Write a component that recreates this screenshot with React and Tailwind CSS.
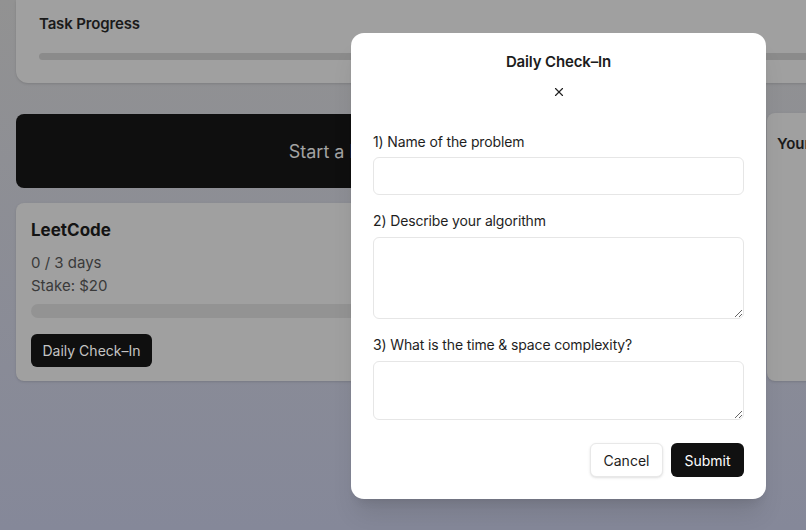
import React from "react";
import { X } from "lucide-react";

export default function App() {
  return (
    <div
      className="relative w-[806px] h-[530px] overflow-hidden bg-gradient-to-b from-[#929292] to-[#858899]"
      style={{ fontFamily: "Inter, 'Noto Sans', sans-serif" }}
    >
      <div className="w-[1126px] px-4">
        {/* Task progress card */}
        <div className="h-[83px] rounded-b-xl bg-[#a0a0a0] shadow-sm px-[23px] pt-[14px]">
          <div className="text-[15px] font-semibold leading-5 text-[#1a1a1a] tracking-[-0.01em]">Task Progress</div>
          <div className="mt-[19px] h-[7px] rounded-full bg-[#8b8b8b]" />
        </div>

        <div className="mt-[31px] grid grid-cols-[735px_1fr] gap-4">
          <div className="flex flex-col gap-[15px]">
            <div className="h-[74px] rounded-lg bg-[#0f0f0f] flex items-center justify-center text-[18px] text-[#a3a3a3]">
              Start a New Challenge
            </div>
            <div className="h-[178px] rounded-lg bg-[#a0a0a0] shadow-sm px-[15px] pt-[17px]">
              <div className="text-[17px] font-bold leading-5 text-[#141414]">LeetCode</div>
              <div className="mt-[11px] text-[15px] leading-[23px] text-[#3a3a3a]">0 / 3 days</div>
              <div className="text-[15px] leading-[23px] text-[#3a3a3a]">Stake: $20</div>
              <div className="mt-[7px] h-[14px] rounded-full bg-[#939393]" />
              <div className="mt-4 inline-flex h-[33px] w-[121px] items-center justify-center rounded-md bg-[#0f0f0f] text-[14px] text-[#c4c4c4]">
                Daily Check–In
              </div>
            </div>
          </div>
          <div className="h-[268px] -mt-px rounded-lg bg-[#a0a0a0] shadow-sm px-[10px] pt-[21px]">
            <div className="text-[15px] font-semibold leading-5 text-[#1a1a1a]">Your Challenges</div>
          </div>
        </div>
      </div>

      {/* Modal */}
      <div className="absolute left-[351px] top-[33px] w-[415px] h-[466px] rounded-[13px] bg-white shadow-xl px-[22px] pt-[19px]">
        <div className="text-center text-[15px] font-semibold leading-5 text-[#1c1c1c] tracking-[-0.01em]">Daily Check–In</div>
        <div className="mt-[13px] flex justify-center">
          <X size={14} strokeWidth={2} className="text-[#222]" />
        </div>
        <div className="mt-[33px] text-[14px] font-normal leading-5 text-[#1e1e1e] tracking-[-0.01em]">1) Name of the problem</div>
        <input className="mt-[5px] block w-full h-[38px] rounded-md border border-[#e6e6e6] outline-none px-3 text-sm" />
        <div className="mt-4 text-[14px] font-normal leading-5 text-[#1e1e1e] tracking-[-0.01em]">2) Describe your algorithm</div>
        <textarea className="mt-[6px] block w-full h-[82px] rounded-md border border-[#e6e6e6] outline-none px-3 py-2 text-sm" />
        <div className="mt-4 text-[14px] font-normal leading-5 text-[#1e1e1e] tracking-[-0.01em]">3) What is the time &amp; space complexity?</div>
        <textarea className="mt-[6px] block w-full h-[59px] rounded-md border border-[#e6e6e6] outline-none px-3 py-2 text-sm" />
        <div className="mt-[23px] flex justify-end gap-2">
          <button className="h-[34px] w-[73px] rounded-md border border-[#e8e8e8] bg-white text-[14px] font-normal text-[#1c1c1c] shadow-sm">
            Cancel
          </button>
          <button className="h-[34px] w-[73px] rounded-md bg-[#111111] text-[14px] font-normal text-white">
            Submit
          </button>
        </div>
      </div>
    </div>
  );
}
